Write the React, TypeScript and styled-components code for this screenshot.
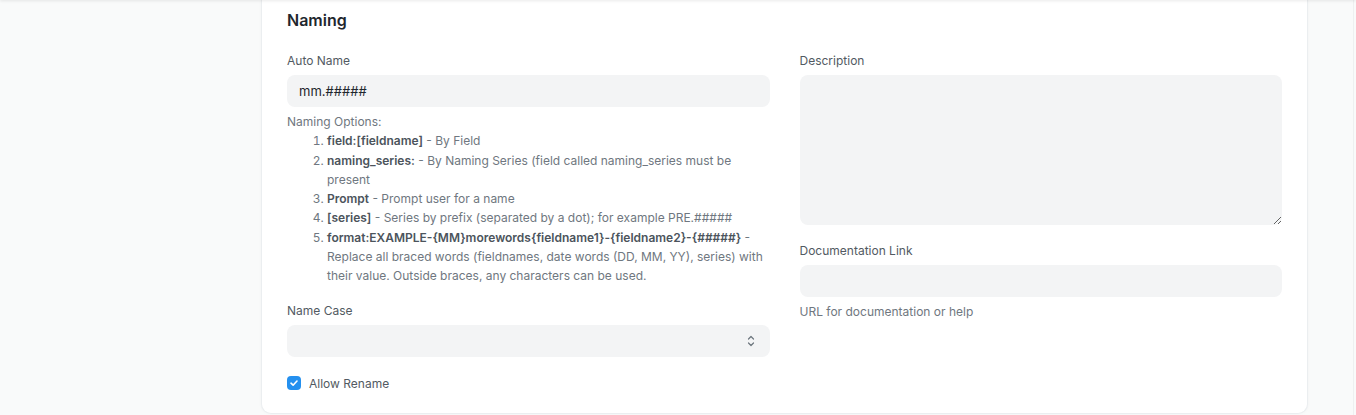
import React from "react";
import styled, { createGlobalStyle } from "styled-components";

const Global = createGlobalStyle`
  html, body { margin: 0; padding: 0; }
  body {
    background: #f9fafa;
    font-family: Inter, "Noto Sans", sans-serif;
    -webkit-font-smoothing: antialiased;
  }
  * { box-sizing: border-box; }
`;

const Page = styled.div`
  position: relative;
  min-height: 415px;
  display: grid;
  grid-template-columns: 261px 1047px 1fr;
  background: #f9fafa;
`;

const TopShadow = styled.div`
  position: absolute;
  top: -2px;
  left: 0;
  right: 0;
  height: 2px;
  box-shadow: 0 1px 3px rgba(0, 0, 0, 0.1);
  z-index: 2;
`;

const EdgeLine = styled.div`
  position: absolute;
  top: 0;
  bottom: 0;
  right: 2px;
  width: 1px;
  background: #eef0f0;
`;

const Card = styled.section`
  grid-column: 2;
  background: #fff;
  border: 1px solid #ebeef0;
  border-top: none;
  border-radius: 0 0 10px 10px;
  box-shadow: 0 0 3px rgba(0, 0, 0, 0.04);
  padding: 8px 25px 20px;
  height: 414px;
`;

const SectionTitle = styled.h3`
  margin: 0 0 20px;
  font-size: 16px;
  line-height: 24px;
  font-weight: 600;
  color: #1f272e;
`;

const Columns = styled.div`
  display: grid;
  grid-template-columns: 1fr 1fr;
  column-gap: 30px;
`;

const Column = styled.div`
  display: flex;
  flex-direction: column;
  gap: 17px;
`;

const FormGroup = styled.div`
  display: flex;
  flex-direction: column;
`;

const Label = styled.label`
  font-size: 12px;
  line-height: 16px;
  color: #525a62;
  padding-top: 1px;
  margin-bottom: 6px;
`;

const Input = styled.div`
  height: 32px;
  border-radius: 8px;
  background: #f3f4f5;
  font-size: 13px;
  color: #1f272e;
  display: flex;
  align-items: center;
  padding: 0 12px;
`;

const TextArea = styled.textarea`
  height: 150px;
  border: none;
  border-radius: 8px;
  background: #f3f4f5;
  resize: vertical;
  font-family: inherit;
  font-size: 13px;
  outline: none;
  padding: 8px 12px;
`;

const SelectBox = styled.div`
  height: 32px;
  border-radius: 8px;
  background: #f3f4f5;
  display: flex;
  align-items: center;
  justify-content: flex-end;
  padding: 0 14px;
  color: #6c757d;
`;

const Help = styled.div`
  margin-top: 5px;
  font-size: 12px;
  line-height: 19.25px;
  color: #6f7780;
`;

const OptionList = styled.ol`
  margin: 0;
  padding-left: 40px;
`;

const Strong = styled.b`
  font-weight: 600;
  color: #4c545c;
`;

const CheckRow = styled.label`
  display: flex;
  align-items: center;
  gap: 8px;
  height: 18px;
  font-size: 12px;
  color: #525a62;
`;

const CheckBox = styled.span`
  width: 14px;
  height: 14px;
  border-radius: 4px;
  background: #2490ef;
  display: inline-flex;
  align-items: center;
  justify-content: center;
`;

const Chevrons = () => (
  <svg width="10" height="14" viewBox="0 0 10 14" fill="none">
    <path d="M2.5 5 L5 2.5 L7.5 5" stroke="#6c757d" strokeWidth="1.2" strokeLinecap="round" strokeLinejoin="round" />
    <path d="M2.5 9 L5 11.5 L7.5 9" stroke="#6c757d" strokeWidth="1.2" strokeLinecap="round" strokeLinejoin="round" />
  </svg>
);

const Check = () => (
  <svg width="10" height="10" viewBox="0 0 10 10" fill="none">
    <path d="M2 5.2 L4.1 7.2 L8 3" stroke="#fff" strokeWidth="1.6" strokeLinecap="round" strokeLinejoin="round" />
  </svg>
);

export default function App() {
  return (
    <>
      <Global />
      <Page>
        <TopShadow />
        <Card>
          <SectionTitle>Naming</SectionTitle>
          <Columns>
            <Column>
              <FormGroup>
                <Label>Auto Name</Label>
                <Input>mm.#####</Input>
                <Help>
                  Naming Options:
                  <OptionList>
                    <li>
                      <Strong>field:[fieldname]</Strong> - By Field
                    </li>
                    <li>
                      <Strong>naming_series:</Strong> - By Naming Series (field called naming_series must be present
                    </li>
                    <li>
                      <Strong>Prompt</Strong> - Prompt user for a name
                    </li>
                    <li>
                      <Strong>[series]</Strong> - Series by prefix (separated by a dot); for example PRE.#####
                    </li>
                    <li>
                      <Strong>format:EXAMPLE-{"{MM}"}morewords{"{fieldname1}"}-{"{fieldname2}"}-{"{#####}"}</Strong> - Replace all braced words (fieldnames, date words (DD, MM, YY), series) with their value. Outside braces, any characters can be used.
                    </li>
                  </OptionList>
                </Help>
              </FormGroup>
              <FormGroup>
                <Label>Name Case</Label>
                <SelectBox>
                  <Chevrons />
                </SelectBox>
              </FormGroup>
              <CheckRow>
                <CheckBox>
                  <Check />
                </CheckBox>
                Allow Rename
              </CheckRow>
            </Column>
            <Column>
              <FormGroup>
                <Label>Description</Label>
                <TextArea />
              </FormGroup>
              <FormGroup>
                <Label>Documentation Link</Label>
                <Input />
                <Help>URL for documentation or help</Help>
              </FormGroup>
            </Column>
          </Columns>
        </Card>
        <EdgeLine />
      </Page>
    </>
  );
}
